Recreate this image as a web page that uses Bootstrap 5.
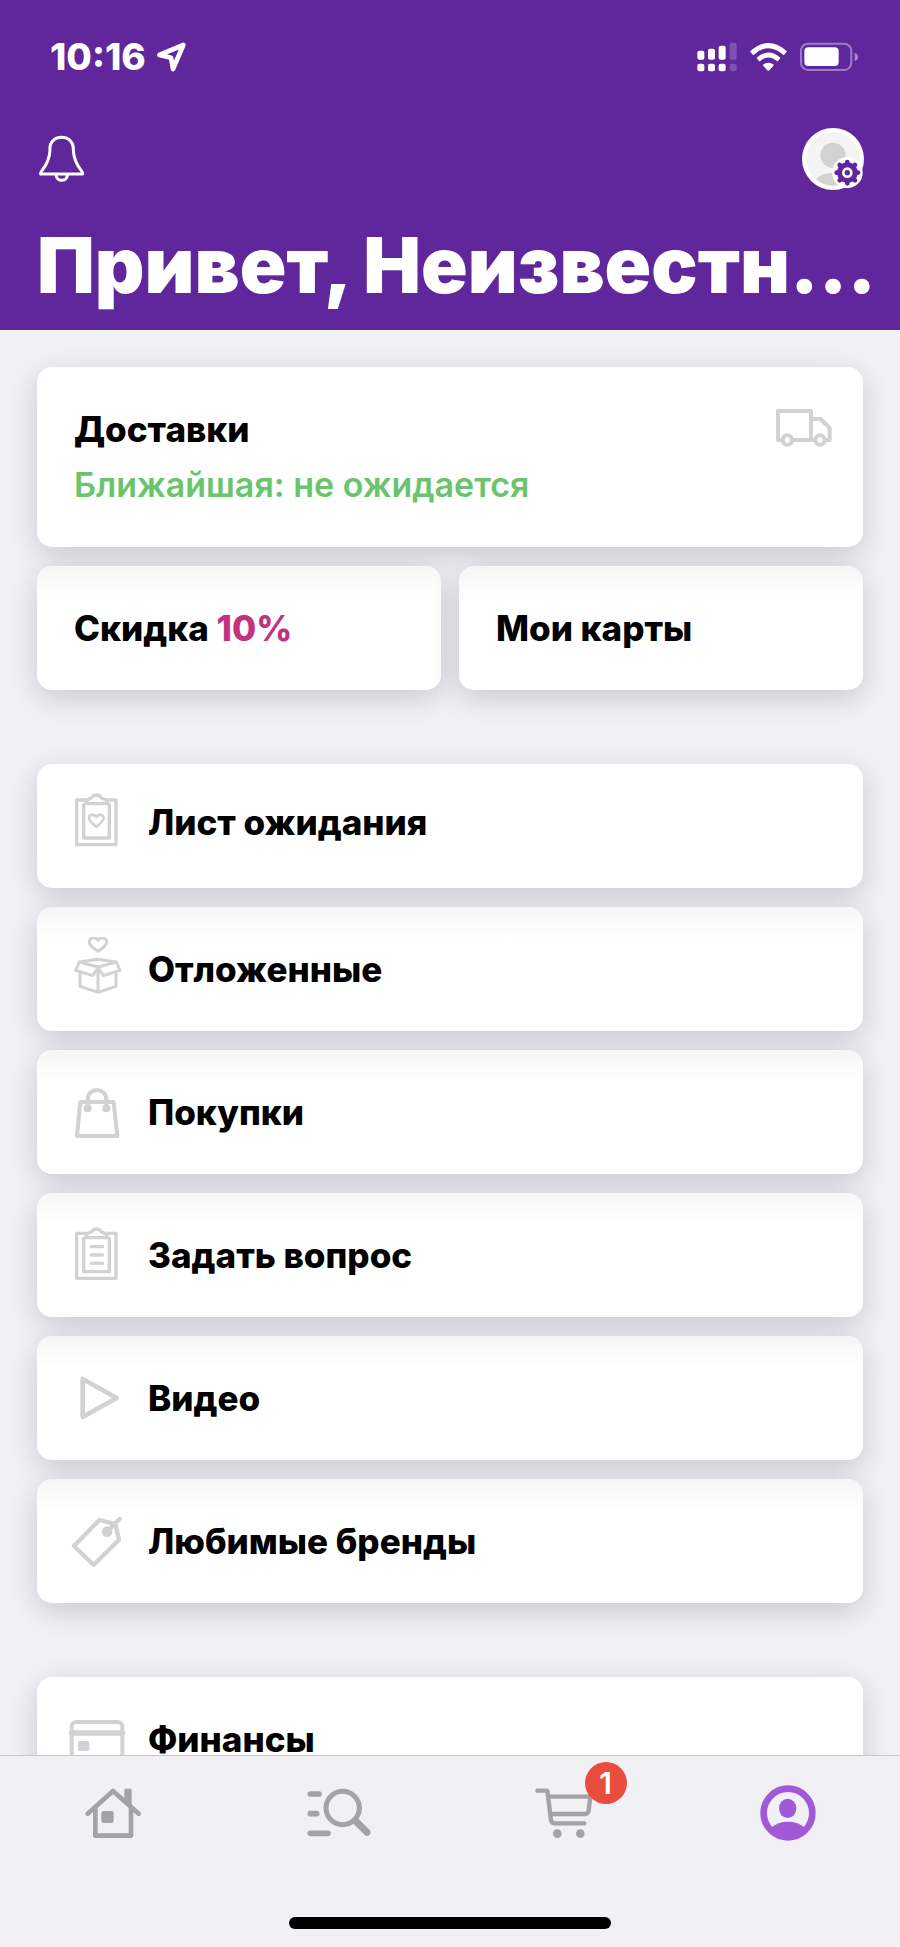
<!DOCTYPE html>
<html lang="ru">
<head>
<meta charset="utf-8">
<meta name="viewport" content="width=device-width, initial-scale=1">
<title>Профиль</title>
<link href="https://cdn.jsdelivr.net/npm/bootstrap@5.3.0/dist/css/bootstrap.min.css" rel="stylesheet">
<style>
  body { font-family: Inter, "Liberation Sans", sans-serif; background: #f0f0f5; color: #000; }
  .screen { height: 100vh; }
  .app-header { background: #5f279b; padding: 0 36px 19px 37px; }
  .status-bar { height: 114px; padding: 0 6px 0 13px; }
  .clock { font-size: 37px; font-weight: 800; line-height: 40px; }
  .location { margin-left: 10px; }
  .status-icons { gap: 13px; }
  .header-tools { margin-top: 14px; }
  .greeting { font-size: 77px; font-weight: 900; line-height: 92px; margin: 29px 0 0; white-space: nowrap; }
  .content { padding: 37px 37px 0; min-height: 0; }
  .group + .group { margin-top: 74px; }
  .stack { display: grid; gap: 19px; }
  .tile { background: #fff; border-radius: 15px; box-shadow: 0 8px 30px rgba(0, 0, 0, .16);
          font-size: 35px; line-height: 56px; font-weight: 800; color: #000; text-decoration: none; }
  .tile-shaded { background: linear-gradient(#f6f6f7, #fff 32px); }
  .tile-text { padding: 34px 37px; }
  .tile-menu { padding: 30px 28px; gap: 19px; }
  .tile-raised { padding-top: 26px; padding-bottom: 34px; }
  .pair { display: grid; grid-template-columns: 1fr 1fr; gap: 18px; margin-top: 19px; }
  .delivery-state { color: #6ac46d; font-size: 34px; font-weight: 600; }
  .percent { color: #c2327e; }
  .truck { margin: 8px -6px 0 0; }
  .line-icon { fill: none; stroke: #d2d2d5; stroke-linecap: round; stroke-linejoin: round; }
  .line-icon .solid { fill: #d2d2d5; stroke: none; }
  .tab-bar { background: #f1f1f5; border-top: 1px solid #c8c8cb; padding: 25px 0 18px; }
  .tab-icon { fill: none; stroke: #a3a3a4; stroke-linecap: round; stroke-linejoin: round; display: block; }
  .tab-icon .solid { fill: #a3a3a4; stroke: none; }
  .cart-count { position: absolute; left: 54px; top: -19px; width: 42px; height: 42px; border-radius: 50%;
                background: #e94d3d; color: #fff; font-size: 30px; line-height: 42px; font-weight: 600; text-align: center; }
  .home-indicator { width: 322px; height: 12px; border-radius: 6px; background: #000; margin: 72px auto 0; }
</style>
</head>
<body>
<div class="screen d-flex flex-column overflow-hidden">
  <header class="app-header text-white flex-shrink-0">
    <div class="status-bar d-flex align-items-center justify-content-between">
      <div class="d-flex align-items-center">
        <span class="clock">10:16</span>
        <svg class="location" width="32" height="32" viewBox="468 124 96 96" aria-hidden="true"><path d="M478 166 550 136 519 208 513 174Z" fill="none" stroke="#fff" stroke-width="14" stroke-linejoin="round"/></svg>
      </div>
      <div class="status-icons d-flex align-items-center">
        <svg width="40" height="30" viewBox="742 127 120 90" fill="#fff" aria-hidden="true">
          <rect x="743" y="153" width="21" height="27" rx="6"/><rect x="775" y="147" width="21" height="33" rx="6"/><rect x="807" y="138" width="21" height="42" rx="6"/><rect x="840" y="129" width="21" height="51" rx="6" opacity=".2"/>
          <rect x="743" y="192" width="21" height="23" rx="6"/><rect x="775" y="192" width="21" height="23" rx="6"/><rect x="807" y="192" width="21" height="23" rx="6"/><rect x="840" y="192" width="21" height="23" rx="6" opacity=".2"/>
        </svg>
        <svg width="37" height="30" viewBox="900 124 111 90" aria-hidden="true">
          <path d="M905 158Q955 112 1006 158" fill="none" stroke="#fff" stroke-width="15"/>
          <path d="M924 177Q955 149 987 177" fill="none" stroke="#fff" stroke-width="14"/>
          <path d="M938 193Q955 179 972 193L959 208Q955 212 951 208Z" fill="#fff"/>
        </svg>
        <svg width="58" height="30" viewBox="1050 126 174 90" aria-hidden="true">
          <rect x="1053" y="131" width="151" height="79" rx="22" fill="none" stroke="#fff" stroke-opacity=".4" stroke-width="6"/>
          <rect x="1063" y="142" width="103" height="56" rx="12" fill="#fff"/><path d="M1214 158q10 4 10 13t-10 13Z" fill="#fff" opacity=".45"/>
        </svg>
      </div>
    </div>
    <div class="header-tools d-flex align-items-center justify-content-between">
      <button type="button" class="btn border-0 p-0 lh-1" aria-label="Уведомления">
        <svg width="48" height="48" viewBox="111 405 144 144" fill="none" stroke="#fff" stroke-width="9" stroke-linejoin="round"><path d="M122 522C116 514 147 502 150 451C147 428 163 412 185 412S222 428 220 451C223 502 253 514 248 522ZM168 523C169 547 201 547 203 523"/></svg>
      </button>
      <button type="button" class="btn border-0 p-0 lh-1" aria-label="Настройки профиля">
        <svg width="62" height="62" viewBox="1056 384 186 186">
          <circle cx="1149" cy="477" r="93" fill="#fff"/><circle cx="1149" cy="477" r="80" fill="#f4f4f5"/>
          <circle cx="1149" cy="466" r="38" fill="#d2d2d3"/><path d="M1098 538Q1114 518 1149 518T1200 538Q1180 557 1149 557T1098 538Z" fill="#d2d2d3"/>
          <circle cx="1192" cy="518" r="46" fill="#fff"/>
          <circle cx="1192" cy="518" r="31" fill="#5f279b"/>
          <path d="M1192 486V550M1160 518H1224M1169 495 1215 541M1215 495 1169 541" stroke="#5f279b" stroke-width="14" stroke-linecap="round"/>
          <circle cx="1192" cy="518" r="12" fill="none" stroke="#fff" stroke-width="8"/>
        </svg>
      </button>
    </div>
    <h1 class="greeting">Привет, Неизвестн…</h1>
  </header>

  <main class="content flex-grow-1 overflow-hidden">
    <section class="group">
      <a href="#" class="tile tile-text d-flex justify-content-between align-items-start">
        <span><span class="d-block">Доставки</span><span class="d-block delivery-state">Ближайшая: не ожидается</span></span>
        <svg class="line-icon truck" width="56" height="38" viewBox="1008 207 168 114" stroke-width="12" aria-hidden="true"><path d="M1028 300H1014V213H1113V300M1056 300H1126M1154 300H1169V264L1142 237H1115"/><circle cx="1042" cy="300" r="14"/><circle cx="1140" cy="300" r="14"/></svg>
      </a>
      <div class="pair">
        <a href="#" class="tile tile-text tile-shaded">Скидка <span class="percent">10%</span></a>
        <a href="#" class="tile tile-text tile-shaded">Мои карты</a>
      </div>
    </section>

    <nav class="group stack" aria-label="Разделы">
      <a href="#" class="tile tile-menu tile-raised d-flex align-items-center">
        <svg class="line-icon" width="64" height="64" viewBox="105 117 192 192" stroke-width="10" aria-hidden="true"><path d="M170 147H140V281H258V147H228M161 160V261H238V160M168 158C168 146 176 143 184 141Q189 132 199 132T214 141C222 143 232 146 232 158Z"/><path d="M199 227C188 219 177 211 177 202C177 190 193 188 199 198C205 188 221 190 221 202C221 211 210 219 199 227Z" stroke-width="8"/></svg>
        <span>Лист ожидания</span>
      </a>
      <a href="#" class="tile tile-menu tile-shaded d-flex align-items-center">
        <svg class="line-icon" width="64" height="64" viewBox="105 558 192 192" stroke-width="9" aria-hidden="true"><path d="M204 601C190 592 178 583 178 573C178 560 197 556 204 568C211 556 230 560 230 573C230 583 218 592 204 601Z"/><path d="M148 633 204 625 259 633 204 648ZM148 633 137 658 188 674 204 650 220 674 270 658 259 633M150 667V706L204 724 258 706V667M204 654V724"/></svg>
        <span>Отложенные</span>
      </a>
      <a href="#" class="tile tile-menu tile-shaded d-flex align-items-center">
        <svg class="line-icon" width="64" height="64" viewBox="105 117 192 192" stroke-width="12" aria-hidden="true"><path d="M151 183H251L262 285H141ZM173 202V176C173 137 229 137 229 176V202"/><circle class="solid" cx="173" cy="202" r="12"/><circle class="solid" cx="229" cy="202" r="12"/></svg>
        <span>Покупки</span>
      </a>
      <a href="#" class="tile tile-menu tile-shaded d-flex align-items-center">
        <svg class="line-icon" width="64" height="64" viewBox="105 546 192 192" stroke-width="10" aria-hidden="true"><path d="M170 577H140V712H258V577H228M161 592V692H238V592M168 590C168 577 176 575 184 573Q189 564 199 564T214 573C222 575 232 577 232 590ZM184 617H218M184 642H218M184 667H218"/></svg>
        <span>Задать вопрос</span>
      </a>
      <a href="#" class="tile tile-menu tile-shaded d-flex align-items-center">
        <svg class="line-icon" width="64" height="64" viewBox="105 105 192 192" stroke-width="14" aria-hidden="true"><path d="M158 144V258L260 201Z"/></svg>
        <span>Видео</span>
      </a>
      <a href="#" class="tile tile-menu tile-shaded d-flex align-items-center">
        <svg class="line-icon" width="64" height="64" viewBox="105 534 192 192" stroke-width="13" aria-hidden="true"><path d="M132 645 208 567 256 579 267 626 191 702ZM232 601 269 564"/><circle class="solid" cx="231" cy="602" r="16"/></svg>
        <span>Любимые бренды</span>
      </a>
    </nav>

    <section class="group">
      <a href="#" class="tile tile-menu d-flex align-items-center">
        <svg class="line-icon" width="64" height="64" viewBox="195 201 192 192" stroke-width="12" aria-hidden="true"><rect x="215" y="246" width="152" height="112" rx="14"/><path d="M215 279H367" stroke-width="17"/><rect class="solid" x="234" y="303" width="34" height="30" rx="5"/></svg>
        <span>Финансы</span>
      </a>
    </section>
  </main>

  <nav class="tab-bar flex-shrink-0 position-relative" aria-label="Основное меню">
    <div class="row g-0">
      <div class="col d-flex justify-content-center"><a href="#" aria-label="Главная">
        <svg class="tab-icon" width="64" height="64" viewBox="242 423 192 192" stroke-width="14"><path d="M262 521 338 453 415 521M285 503V587H392V503"/><path d="M372 449Q372 446 375 446H391Q394 446 394 449V503L372 484Z" class="solid"/><rect class="solid" x="303" y="513" width="37" height="36" rx="7"/></svg></a></div>
      <div class="col d-flex justify-content-center"><a href="#" aria-label="Каталог и поиск">
        <svg class="tab-icon" width="64" height="64" viewBox="917 423 192 192" overflow="visible" stroke-width="17"><path d="M930 462H956M930 521H949M930 580H983"/><circle cx="1027" cy="504" r="50" stroke-width="15"/><path d="M1065 542 1100 577" stroke-width="21"/></svg></a></div>
      <div class="col d-flex justify-content-center"><a href="#" class="position-relative text-decoration-none" aria-label="Корзина, товаров: 1">
        <svg class="tab-icon" width="64" height="64" viewBox="242 423 192 192" stroke-width="13"><path d="M261 452H291L302 540Q304 550 314 550H402M300 470H420L415 512Q413 522 404 522H304"/><circle class="solid" cx="321" cy="581" r="13"/><circle class="solid" cx="390" cy="581" r="13"/></svg>
        <span class="cart-count">1</span></a></div>
      <div class="col d-flex justify-content-center"><a href="#" aria-current="page" aria-label="Профиль">
        <svg class="d-block" width="64" height="64" viewBox="917 423 192 192" fill="#a259d6"><circle cx="1013" cy="519" r="73" fill="none" stroke="#a259d6" stroke-width="20"/><ellipse cx="1012" cy="505" rx="26" ry="29"/><path d="M964 562Q982 545 1013 545T1062 562L1055 582Q1013 612 971 582Z"/></svg></a></div>
    </div>
    <div class="home-indicator"></div>
  </nav>
</div>
<script src="https://cdn.jsdelivr.net/npm/bootstrap@5.3.0/dist/js/bootstrap.bundle.min.js"></script>
</body>
</html>
